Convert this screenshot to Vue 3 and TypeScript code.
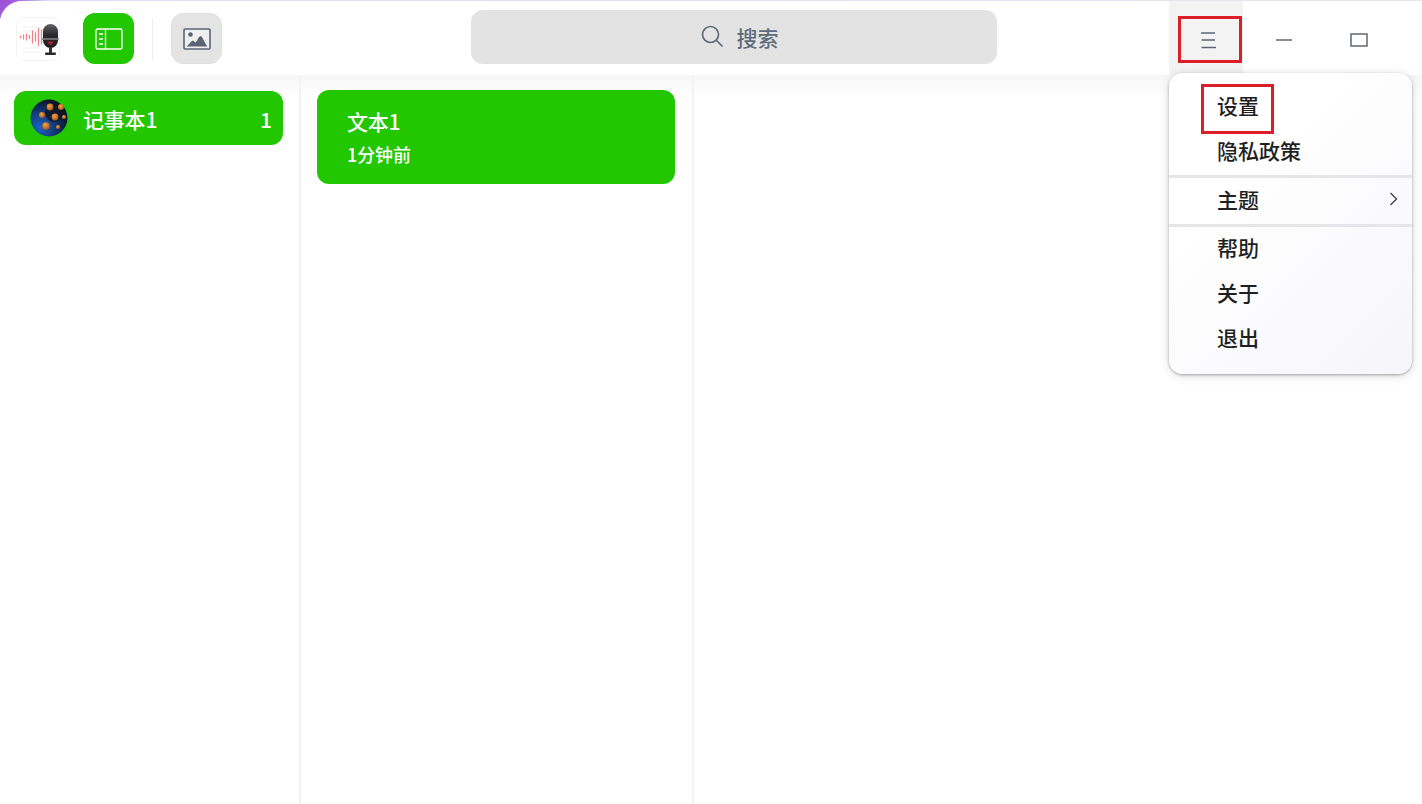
<script setup lang="ts">
interface MenuRow { label: string; arrow?: boolean }
const groups: MenuRow[][] = [
  [{ label: '设置' }, { label: '隐私政策' }],
  [{ label: '主题', arrow: true }],
  [{ label: '帮助' }, { label: '关于' }, { label: '退出' }],
]
const dots = [
  { x: 20, y: 8, r: 3.4 }, { x: 31, y: 8, r: 3 }, { x: 12, y: 16, r: 3 }, { x: 25, y: 18, r: 3.4 },
  { x: 34, y: 18, r: 2 }, { x: 16, y: 27, r: 3.8 }, { x: 28, y: 28, r: 2 },
]
</script>

<template>
  <div class="window">
    <div class="shell">
      <header class="topbar">
        <div class="left-tools">
          <div class="logo">
            <svg width="44" height="44" viewBox="0 0 44 44">
              <defs>
                <linearGradient id="micBody" x1="0" y1="0" x2="0" y2="1">
                  <stop offset="0" stop-color="#626266" />
                  <stop offset="0.45" stop-color="#2a2a2d" />
                  <stop offset="1" stop-color="#1d1d20" />
                </linearGradient>
              </defs>
              <g stroke="#f1f1f1" stroke-width="1">
                <path d="M6 10H24M6 14H24M6 31H24M6 35H24" />
              </g>
              <g stroke="#ef858a" stroke-width="1.300" stroke-linecap="round">
                <path d="M4.500 19v2M7.500 18v4M10.500 17v6M13.500 18.500v3M16.500 14v12M19.500 16v8M22.500 11.500v17M25.500 13v14" />
              </g>
              <rect x="27" y="7" width="15" height="24" rx="7.500" fill="url(#micBody)" />
              <path d="M25.500 22H43" stroke="#85858a" stroke-width="1.500" />
              <path d="M31 24.500l3.500 4 3.500-4z" fill="#a8282e" />
              <rect x="33" y="31" width="3" height="5" fill="#333" />
              <rect x="29" y="35.500" width="11" height="2.500" rx="1" fill="#2b2b2e" />
            </svg>
          </div>
          <button class="tool tool-green">
            <svg width="28" height="22" viewBox="0 0 28 22" fill="none" stroke="#fff" stroke-width="1.300">
              <rect x="1" y="1" width="26" height="20" rx="1.500" />
              <path d="M10.500 1V21" />
              <path d="M4 6H8M4 11H8M4 16H8" stroke-width="1.600" />
            </svg>
          </button>
          <div class="divider"></div>
          <button class="tool tool-gray">
            <svg width="28" height="22" viewBox="0 0 28 22">
              <rect x="1" y="1" width="26" height="20" rx="1" fill="#f0f0f1" stroke="#5b6477" stroke-width="1.600" />
              <circle cx="7.500" cy="6.500" r="2.300" fill="#5b6477" />
              <path d="M3.500 18.500c2-1 4-5 6-6 1 0 2 1.500 3 2 1.500-1 3-6 5-6.500 2 0 4 7 7 10.500z" fill="#5b6477" />
            </svg>
          </button>
        </div>
        <div class="search">
          <svg width="26" height="26" viewBox="0 0 26 26" fill="none" stroke="#5f6b7a" stroke-width="1.700">
            <circle cx="11.500" cy="11.500" r="8" />
            <path d="M17.500 17.500L23 23" stroke-linecap="round" />
          </svg>
          <span class="search-label">搜索</span>
        </div>
        <div class="win-controls">
          <div class="ctl ctl-active">
            <svg width="18" height="18" viewBox="0 0 18 18" stroke="#5c6678" stroke-width="1.300">
              <path d="M2 2H16M2.500 9H16M2.500 16.500H17" />
            </svg>
            <div class="red-mark mark-burger"></div>
          </div>
          <div class="ctl">
            <svg width="18" height="18" viewBox="0 0 18 18" stroke="#5c6678" stroke-width="1.500">
              <path d="M1 9H17" />
            </svg>
          </div>
          <div class="ctl">
            <svg width="18" height="18" viewBox="0 0 18 18" fill="none" stroke="#5c6678" stroke-width="1.500">
              <rect x="1" y="3" width="16" height="12" />
            </svg>
          </div>
        </div>
      </header>

      <main class="columns">
        <section class="col col-books">
          <div class="book">
            <svg class="avatar" width="38" height="38" viewBox="0 0 38 38">
              <defs>
                <radialGradient id="ball" cx="25%" cy="75%" r="75%">
                  <stop offset="0" stop-color="#1a63c4" />
                  <stop offset="0.55" stop-color="#123a78" />
                  <stop offset="1" stop-color="#0b1528" />
                </radialGradient>
                <radialGradient id="seed" cx="40%" cy="35%" r="65%">
                  <stop offset="0" stop-color="#f7a43f" />
                  <stop offset="1" stop-color="#a9571c" />
                </radialGradient>
              </defs>
              <circle cx="19" cy="19" r="18.500" fill="url(#ball)" />
              <circle cx="24" cy="14" r="9" fill="#0e1420" opacity="0.75" />
              <circle v-for="(d, i) in dots" :key="i" :cx="d.x" :cy="d.y" :r="d.r" fill="url(#seed)" />
            </svg>
            <span class="book-title">记事本1</span>
            <span class="book-count">1</span>
          </div>
        </section>
        <section class="col col-notes">
          <div class="note">
            <div class="note-title">文本1</div>
            <div class="note-time">1分钟前</div>
          </div>
        </section>
        <section class="col col-editor"></section>
      </main>
    </div>

    <nav class="menu">
      <div v-for="(group, gi) in groups" :key="gi" class="menu-group">
        <div v-for="row in group" :key="row.label" class="menu-row">
          <span>{{ row.label }}</span>
          <svg v-if="row.arrow" class="arrow" width="9" height="14" viewBox="0 0 9 14" fill="none" stroke="#444" stroke-width="1.400">
            <path d="M1.500 1L7.500 7L1.500 13" />
          </svg>
        </div>
      </div>
      <div class="red-mark mark-settings"></div>
    </nav>
  </div>
</template>

<style>
html, body { margin: 0; background: #fff; }
</style>

<style scoped>
.window {
  position: relative;
  width: 1422px;
  height: 804px;
  overflow: hidden;
  font-family: "Noto Sans CJK SC", "Noto Sans", sans-serif;
  background: radial-gradient(circle at 0 0, #9c4fd6 0, #a45cd9 15px, #e0dcf3 48px, #e6e6f2 100%);
}
.shell {
  height: 803px;
  margin-top: 1px;
  border-top-left-radius: 22px;
  background: #fff;
  display: flex;
  flex-direction: column;
  overflow: hidden;
}
.topbar {
  position: relative;
  height: 74px;
  flex: none;
  display: flex;
  align-items: center;
  justify-content: space-between;
  background: #fff;
}
.left-tools {
  display: flex;
  align-items: center;
  margin-left: 16px;
  margin-top: 1px;
}
.logo {
  width: 44px;
  height: 44px;
  border-radius: 8px;
  border: 1px solid #f3f3f3;
  box-sizing: border-box;
  overflow: hidden;
}
.logo svg { margin: -1px; display: block; }
.tool {
  width: 51px;
  height: 51px;
  padding: 0;
  border: none;
  border-radius: 12px;
  display: flex;
  align-items: center;
  justify-content: center;
}
.tool-green { margin-left: 23px; background: #22c700; }
.tool-gray { background: #e4e4e4; border: 1px solid #e0e0e0; box-sizing: border-box; }
.divider { width: 1px; height: 42px; margin: 0 18px; background: #eeeeee; }
.search {
  position: absolute;
  left: 471px;
  top: 9px;
  width: 526px;
  height: 54px;
  border-radius: 12px;
  background: #e3e3e4;
  display: flex;
  align-items: center;
  justify-content: center;
  gap: 12px;
  color: #5f6b7a;
  font-size: 21px;
  font-weight: 500;
}
.search svg { margin-left: 9px; margin-top: -2px; }
.search-label { margin-top: -1px; }
.win-controls {
  position: absolute;
  left: 1169px;
  top: -1px;
  height: 75px;
  display: flex;
}
.ctl {
  position: relative;
  width: 75px;
  height: 75px;
  display: flex;
  align-items: center;
  justify-content: center;
  padding: 4px 0 0 2px;
  box-sizing: border-box;
}
.ctl-active { background: #f3f3f4; width: 74px; margin-right: 2px; padding: 4px 0 0 4px; }
.red-mark {
  position: absolute;
  border: 3px solid #dc1e28;
  box-sizing: border-box;
  pointer-events: none;
}
.mark-burger { left: 9px; top: 16px; width: 64px; height: 47px; }
.mark-settings { left: 32px; top: 11px; width: 73px; height: 50px; }
.columns {
  flex: 1;
  display: flex;
  min-height: 0;
}
.col {
  box-sizing: border-box;
  background: linear-gradient(180deg, #f6f6f6 0, #fff 22px);
}
.col-books { width: 301px; border-right: 2px solid #f3f3f3; padding: 16px 16px 0 14px; }
.col-notes { width: 393px; border-right: 2px solid #f3f3f3; padding: 15px 17px 0 16px; }
.col-editor { flex: 1; }
.book {
  height: 54px;
  border-radius: 12px;
  background: #22c700;
  display: flex;
  align-items: center;
  color: #fff;
  padding: 0 11px 0 16px;
}
.avatar { flex: none; }
.book-title { margin: 2px 0 0 15px; font-size: 21px; font-weight: 500; flex: 1; line-height: 1; letter-spacing: -0.200px; }
.book-count { margin-top: 2px; font-size: 21px; font-weight: 500; line-height: 1; }
.note {
  height: 94px;
  box-sizing: border-box;
  border-radius: 12px;
  background: #22c700;
  color: #fff;
  padding: 17px 30px 0;
}
.note-title { font-size: 21px; font-weight: 500; line-height: 28px; letter-spacing: -0.200px; }
.note-time { font-size: 18px; font-weight: 500; line-height: 24px; margin-top: 7px; letter-spacing: -0.100px; }
.menu {
  position: absolute;
  left: 1169px;
  top: 73px;
  width: 243px;
  height: 301px;
  box-sizing: border-box;
  border-radius: 14px;
  background: linear-gradient(135deg, #ffffff 30%, #f6f6fa 100%);
  box-shadow: 0 1px 3px rgba(0, 0, 0, 0.32), 0 2px 12px rgba(0, 0, 0, 0.12);
  padding-top: 12px;
}
.menu-group + .menu-group { border-top: 3px solid #e5e5ea; }
.menu-group:nth-child(2) { padding-top: 1px; }
.menu-row {
  height: 45px;
  box-sizing: border-box;
  display: flex;
  align-items: center;
  justify-content: space-between;
  padding: 0 14px 5px 48px;
  font-size: 21px;
  font-weight: 500;
  color: #1f1f1f;
}
.arrow { display: block; }
</style>
